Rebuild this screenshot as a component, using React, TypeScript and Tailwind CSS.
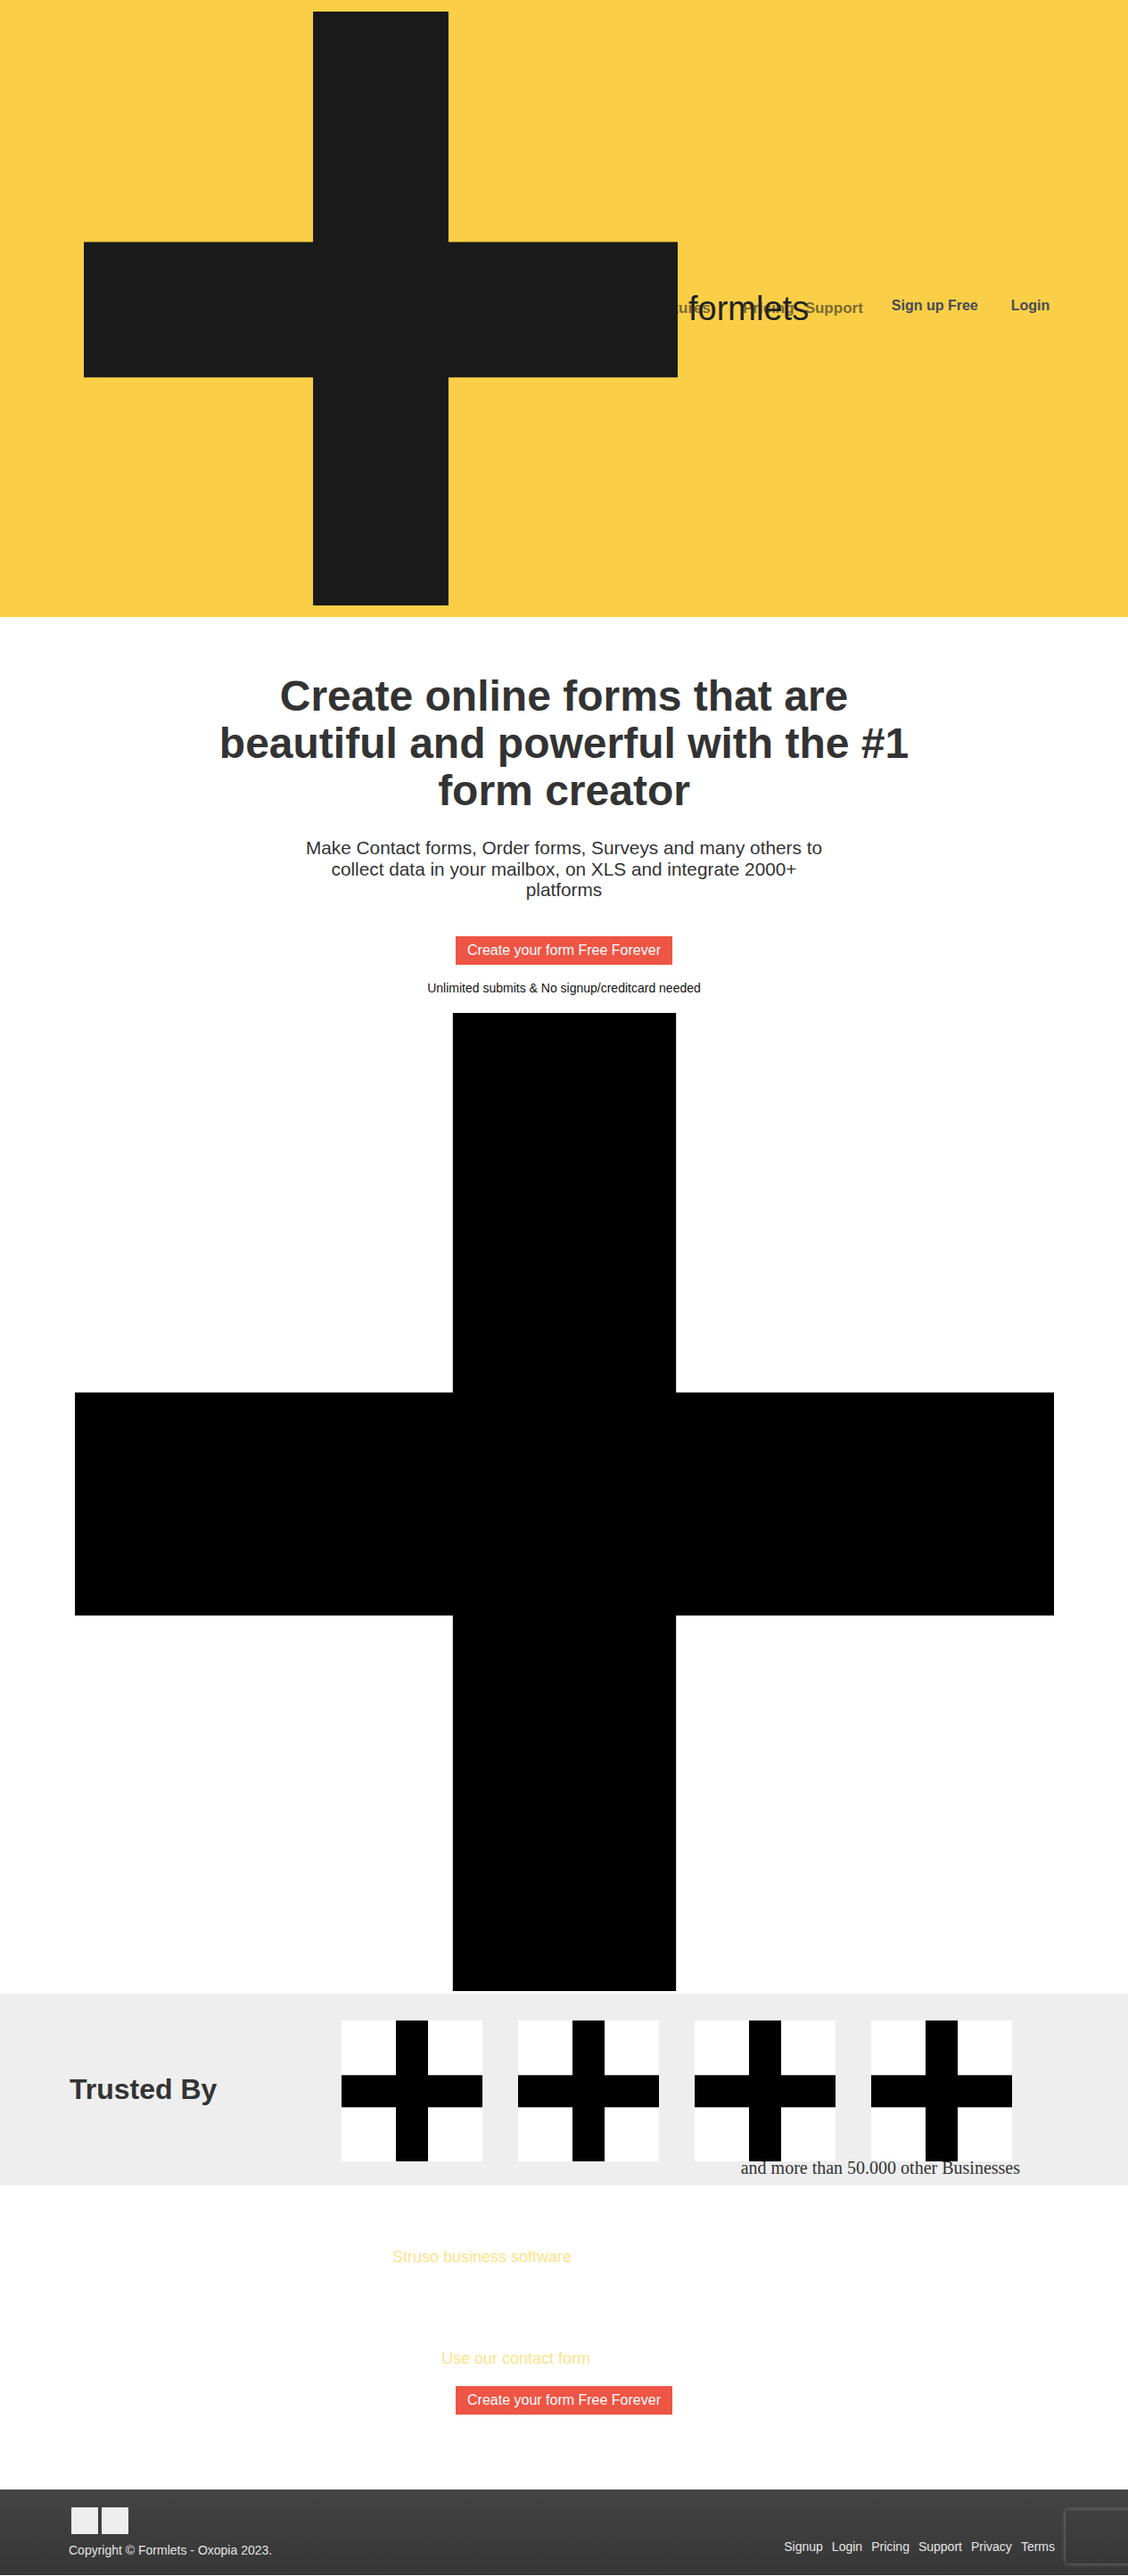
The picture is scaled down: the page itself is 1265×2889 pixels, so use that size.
function Cross({ className, fill }: { className: string; fill: string }) {
  return (
    <svg viewBox="0 0 100 100" preserveAspectRatio="none" className={className}>
      <rect x="38.6" y="0" width="22.8" height="100" fill={fill} />
      <rect x="0" y="38.8" width="100" height="22.8" fill={fill} />
    </svg>
  );
}

const footerLinks = ["Signup", "Login", "Pricing", "Support", "Privacy", "Terms"];

export default function App() {
  return (
    <div className="min-h-screen bg-white font-['Liberation_Sans',Arial,sans-serif] text-[#333]">
      {/* header */}
      <header className="h-[692px] bg-[#facf47] flex items-center pl-[94px]">
        <div className="relative z-10 flex items-center">
          <Cross className="w-[666px] h-[666px] shrink-0" fill="#1a1a1a" />
          <span className="ml-[12px] text-[38px] leading-none text-[#222]">formlets</span>
        </div>
        <nav className="ml-[-181px] flex items-center font-bold">
          <a className="text-[17px] text-[#7b6a33]">Features</a>
          <a className="ml-[36px] text-[17px] text-[#7b6a33]">Pricing</a>
          <a className="ml-[12px] text-[17px] text-[#7b6a33]">Support</a>
          <a className="ml-[32px] mb-[6px] text-[16px] text-[#454a54]">Sign up Free</a>
          <a className="ml-[37px] mb-[6px] text-[16px] text-[#454a54]">Login</a>
        </nav>
      </header>

      {/* hero */}
      <section className="flex flex-col items-center pt-[63px] pb-[3px]">
        <h1 className="max-w-[800px] text-center text-[48px] leading-[1.1] font-bold text-[#333]">
          Create online forms that are beautiful and powerful with the #1 form creator
        </h1>
        <p className="mt-[26px] max-w-[600px] text-center text-[20.8px] leading-[23.5px] text-[#333]">
          Make Contact forms, Order forms, Surveys and many others to collect data in your mailbox, on XLS and integrate 2000+ platforms
        </p>
        <a className="mt-[40px] h-[32px] px-[13px] flex items-center bg-[#ee5545] text-white text-[16px]">
          Create your form Free Forever
        </a>
        <p className="mt-[16px] text-[14px] leading-[20px] text-[#111]">Unlimited submits &amp; No signup/creditcard needed</p>
        <Cross className="mt-[18px] w-[1098px] h-[1097px]" fill="#000" />
      </section>

      {/* trusted by */}
      <section className="bg-[#eeeeee] pt-[30px] pb-[8px] pl-[78px] flex">
        <div className="w-[305px] h-[158px] shrink-0 flex items-center">
          <h2 className="mb-[4px] text-[32px] font-bold text-[#333]">Trusted By</h2>
        </div>
        <div className="w-[761px]">
          <div className="flex gap-[40px]">
            {[0, 1, 2, 3].map((i) => (
              <div key={i} className="w-[158px] h-[158px] bg-white">
                <Cross className="w-full h-full" fill="#000" />
              </div>
            ))}
          </div>
          <p className="-mt-[5px] text-right font-['Liberation_Serif',serif] text-[20px] leading-[24px] text-[#333]">
            and more than 50.000 other Businesses
          </p>
        </div>
      </section>

      {/* links */}
      <section className="pt-[70px] pb-[84px] flex flex-col">
        <a className="pl-[440px] text-[18px] leading-[20px] text-[#fde38b]">Struso business software</a>
        <a className="mt-[94px] pl-[495px] text-[18px] leading-[20px] text-[#fde38b]">Use our contact form</a>
        <div className="mt-[21px] flex justify-center">
          <a className="h-[32px] px-[13px] flex items-center bg-[#ee5545] text-white text-[16px]">
            Create your form Free Forever
          </a>
        </div>
      </section>

      {/* footer */}
      <footer className="h-[96px] bg-gradient-to-b from-[#444] to-[#363636] pl-[77px] pr-[82px] pt-[20px] flex justify-between items-start">
        <div>
          <div className="flex gap-[4px] pl-[3px]">
            <div className="w-[30px] h-[30px] bg-[#eee]" />
            <div className="w-[30px] h-[30px] bg-[#eee]" />
          </div>
          <p className="mt-[8px] text-[14px] leading-[20px] text-[#e6e6e6]">Copyright © Formlets - Oxopia 2023.</p>
        </div>
        <div className="mt-[34px] flex gap-[10px] text-[14px] leading-[20px] text-[#e6e6e6]">
          {footerLinks.map((l) => (
            <a key={l}>{l}</a>
          ))}
        </div>
      </footer>

      <div className="fixed bottom-[14px] right-[-186px] w-[256px] h-[60px] rounded-[3px] shadow-[0_0_5px_gray]" />
    </div>
  );
}
